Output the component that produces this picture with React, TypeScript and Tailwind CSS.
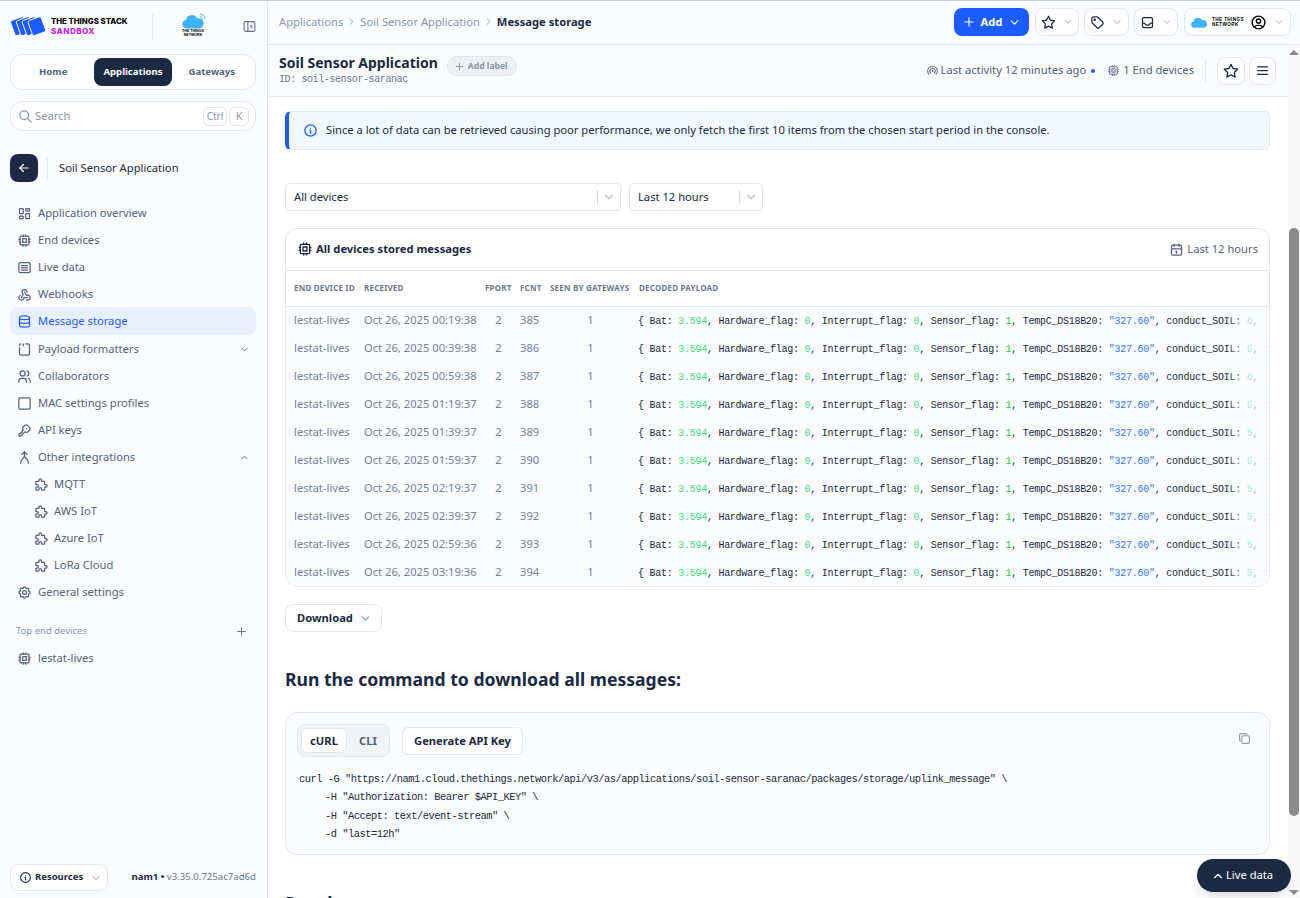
import type { ReactNode } from 'react';
import {
  TbArrowLeft,
  TbArrowMerge,
  TbBroadcast,
  TbCalendar,
  TbChevronDown,
  TbChevronRight,
  TbChevronUp,
  TbCopy,
  TbCpu,
  TbDatabase,
  TbInbox,
  TbInfoCircle,
  TbKey,
  TbLayoutDashboard,
  TbMenu2,
  TbPlus,
  TbPuzzle,
  TbSearch,
  TbSettings,
  TbSquare,
  TbStar,
  TbTag,
  TbUserCircle,
  TbUsers,
  TbWebhook,
} from 'react-icons/tb';

const messages = [
  ['Oct 26, 2025 00:19:38', '385', '6'],
  ['Oct 26, 2025 00:39:38', '386', '6'],
  ['Oct 26, 2025 00:59:38', '387', '6'],
  ['Oct 26, 2025 01:19:37', '388', '6'],
  ['Oct 26, 2025 01:39:37', '389', '5'],
  ['Oct 26, 2025 01:59:37', '390', '6'],
  ['Oct 26, 2025 02:19:37', '391', '5'],
  ['Oct 26, 2025 02:39:37', '392', '5'],
  ['Oct 26, 2025 02:59:36', '393', '5'],
  ['Oct 26, 2025 03:19:36', '394', '5'],
];

const LiveDataIcon = () => (
  <svg viewBox="0 0 24 24" className="w-[15px] h-[15px]" fill="none" stroke="currentColor" strokeWidth="2" strokeLinecap="round">
    <rect x="3" y="4" width="18" height="16" rx="2.5" />
    <path d="M7 9h10M7 12.5h10M7 16h10" />
  </svg>
);

const FormatterIcon = () => (
  <svg viewBox="0 0 24 24" className="w-[15px] h-[15px]" fill="none" stroke="currentColor" strokeWidth="2" strokeLinecap="round">
    <path d="M4 9v9a3 3 0 0 0 3 3h10a3 3 0 0 0 3-3V6a3 3 0 0 0-3-3h-3" />
    <path d="M4 5a2 2 0 0 1 2-2M10 3v3" />
  </svg>
);

const PanelIcon = () => (
  <svg viewBox="0 0 24 24" className="w-[13px] h-[13px] text-slate-500" fill="none" stroke="currentColor" strokeWidth="2" strokeLinejoin="round">
    <rect x="2" y="3" width="20" height="18" rx="3" />
    <path d="M9 3v18M17 9l-3 3 3 3" />
  </svg>
);

const StackLogo = () => (
  <svg viewBox="0 0 37 21" className="w-[37px] h-[21px]">
    {[0, 6, 12, 18].map((x) => (
      <rect key={x} x={x + 2.5} y="2" width="14.5" height="16.5" rx="2" fill="#1c5cff" stroke="#fbfcfe" strokeWidth="0.9" transform={`rotate(-20 ${x + 9.5} 10.5)`} />
    ))}
  </svg>
);

const Cloud = ({ className }: { className: string }) => (
  <svg viewBox="0 0 26 16" className={className}>
    <path d="M6 15.5a4.6 4.6 0 0 1-.8-9.1A6.5 6.5 0 0 1 17.4 4.6a5.6 5.6 0 0 1 3 10.9z" fill="#3fb4f5" />
  </svg>
);

const NetworkLogo = () => (
  <div className="flex flex-col items-center w-[24px]">
    <div className="relative">
      <Cloud className="w-[24px] h-[15px]" />
      <svg viewBox="0 0 8 8" className="absolute -top-[1px] -right-[1px] w-[7px] h-[7px]" fill="none" stroke="#3fb4f5" strokeWidth="1">
        <path d="M1 1a6 6 0 0 1 6 6M1 4a3 3 0 0 1 3 3" />
      </svg>
    </div>
    <div className="text-[3.6px] leading-[3.6px] font-bold text-black text-center mt-[1px] whitespace-nowrap font-['Liberation_Sans',sans-serif]">
      THE THINGS
      <br />
      NETWORK
    </div>
  </div>
);

const NavItem = ({ icon, label, active, sub, trailing, shifted }: { icon: ReactNode; label: string; active?: boolean; sub?: boolean; trailing?: ReactNode; shifted?: boolean }) => (
  <div
    className={`flex items-center h-[28px] -mb-px rounded-lg text-[11.2px] ${shifted ? 'mt-px' : ''} ${sub ? 'pl-[24px] gap-[5px]' : 'pl-[7px] gap-[6px]'} pr-[6px] ${
      active ? 'bg-[#e8f0fe] text-[#1c5cff]' : 'text-[#53627d]'
    }`}
  >
    <span className="flex w-[15px] justify-center text-[15px]">{icon}</span>
    <span className="flex-1">{label}</span>
    {trailing}
  </div>
);

const IconButton = ({ children, width }: { children: ReactNode; width: string }) => (
  <div className={`flex items-center justify-center gap-[6px] h-[28px] ${width} bg-white border border-[#e2e6ee] rounded-lg text-[#1c2942]`}>
    {children}
  </div>
);

const Sidebar = () => (
  <aside className="flex flex-col w-[268px] shrink-0 h-full bg-[#fbfcfe] border-r border-[#e2e6ee] pl-[10px] pr-[11px]">
    {/* Logos */}
    <div className="flex items-center h-[53px] pb-[3px]">
      <StackLogo />
      <div className="ml-[5px] w-[100px] font-['Inter',sans-serif] font-extrabold text-[7.8px] leading-[10px]">
        <div className="text-black whitespace-nowrap">THE THINGS STACK</div>
        <div className="text-[#c026e8] text-[8.2px] tracking-[0.4px]">SANDBOX</div>
      </div>
      <div className="w-px h-[25px] bg-[#e2e6ee] ml-[4px]" />
      <div className="ml-[28px]">
        <NetworkLogo />
      </div>
      <div className="ml-[38px]">
        <PanelIcon />
      </div>
    </div>

    {/* Tabs */}
    <div className="flex items-center h-[36px] bg-white border border-[#e2e6ee] rounded-xl px-[3px] text-[9.6px] font-bold text-[#53627d]">
      <div className="w-[81px] pr-[2px] text-center">Home</div>
      <div className="flex items-center justify-center w-[78px] h-[28px] bg-[#1c2942] text-white rounded-lg">Applications</div>
      <div className="w-[81px] text-center">Gateways</div>
    </div>

    {/* Search */}
    <div className="flex items-center h-[30px] mt-[11px] bg-white border border-[#e2e6ee] rounded-xl pl-[7px] pr-[6px] text-[11.2px] text-[#8a96ab]">
      <TbSearch className="text-[15px] mr-[2px]" />
      <span className="flex-1 pt-px">Search</span>
      <span className="flex items-center justify-center w-[24px] h-[19px] border border-[#dfe3eb] rounded-md text-[10px]">Ctrl</span>
      <span className="flex items-center justify-center w-[20px] h-[19px] ml-[2px] border border-[#dfe3eb] rounded-md text-[10px]">K</span>
    </div>

    {/* Application */}
    <div className="flex items-center h-[28px] mt-[23px] mb-[17px]">
      <div className="flex items-center justify-center w-[28px] h-[28px] bg-[#1c2942] rounded-lg text-white text-[14px]">
        <TbArrowLeft />
      </div>
      <div className="w-px h-[21px] bg-[#e2e6ee] ml-[9px] mr-[11px]" />
      <span className="text-[11.2px] text-[#1c2942]">Soil Sensor Application</span>
    </div>

    {/* Navigation */}
    <nav className="flex flex-col">
      <NavItem icon={<TbLayoutDashboard />} label="Application overview" />
      <NavItem icon={<TbCpu />} label="End devices" />
      <NavItem icon={<LiveDataIcon />} label="Live data" />
      <NavItem icon={<TbWebhook />} label="Webhooks" />
      <NavItem icon={<TbDatabase />} label="Message storage" active />
      <NavItem shifted icon={<FormatterIcon />} label="Payload formatters" trailing={<TbChevronDown className="text-[11px]" />} />
      <NavItem icon={<TbUsers />} label="Collaborators" />
      <NavItem icon={<TbSquare />} label="MAC settings profiles" />
      <NavItem icon={<TbKey />} label="API keys" />
      <NavItem icon={<TbArrowMerge />} label="Other integrations" trailing={<TbChevronUp className="text-[11px]" />} />
      <NavItem sub icon={<TbPuzzle />} label="MQTT" />
      <NavItem sub icon={<TbPuzzle />} label="AWS IoT" />
      <NavItem sub icon={<TbPuzzle />} label="Azure IoT" />
      <NavItem sub icon={<TbPuzzle />} label="LoRa Cloud" />
      <NavItem icon={<TbSettings />} label="General settings" />
    </nav>

    <div className="flex items-center justify-between h-[20px] mt-[16px] mb-[3px] pl-[6px] pr-[8px] text-[9.5px] text-[#8a96ab]">
      <span>Top end devices</span>
      <TbPlus className="text-[13px] text-[#6b7890]" />
    </div>
    <NavItem icon={<TbCpu />} label="lestat-lives" />

    {/* Footer */}
    <div className="flex items-center justify-between mt-auto mb-[7px]">
      <div className="flex items-center h-[27px] w-[98px] pl-[8px] bg-white border border-[#e2e6ee] rounded-lg text-[9.5px] font-bold text-[#1c2942]">
        <TbInfoCircle className="text-[13px] mr-[3px]" />
        Resources
        <TbChevronDown className="text-[12px] text-[#8a96ab] ml-[7px]" />
      </div>
      <div className="text-[9.6px] whitespace-nowrap">
        <span className="font-bold text-[#1c2942]">nam1 • </span>
        <span className="text-[#6b7890]">v3.35.0.725ac7ad6d</span>
      </div>
    </div>
  </aside>
);

const TopBar = () => (
  <header className="flex items-center h-[44px] shrink-0 bg-[#fbfcfe] border-b border-[#e2e6ee] pl-[11px] pr-[9px] pb-[1px]">
    <div className="flex items-center flex-1 text-[11.2px] text-[#8a96ab]">
      Applications
      <TbChevronRight className="mx-[3px] text-[11px]" />
      Soil Sensor Application
      <TbChevronRight className="mx-[3px] text-[11px]" />
      <span className="font-bold text-[#1c2942]">Message storage</span>
    </div>
    <div className="flex items-center">
      <div className="flex items-center justify-center gap-[5px] w-[75px] h-[28px] bg-[#1c5cff] rounded-lg text-white text-[11.2px] font-bold">
        <TbPlus className="text-[14px]" />
        Add
        <TbChevronDown className="text-[13px] ml-[1px]" />
      </div>
      <div className="ml-[6px]">
        <IconButton width="w-[44px]">
          <TbStar className="text-[15px]" />
          <TbChevronDown className="text-[12px] text-[#a0aabb]" />
        </IconButton>
      </div>
      <div className="ml-[5px]">
        <IconButton width="w-[45px]">
          <TbTag className="text-[15px]" />
          <TbChevronDown className="text-[12px] text-[#a0aabb]" />
        </IconButton>
      </div>
      <div className="ml-[5px]">
        <IconButton width="w-[44px]">
          <TbInbox className="text-[15px]" />
          <TbChevronDown className="text-[12px] text-[#a0aabb]" />
        </IconButton>
      </div>
      <div className="ml-[6px]">
        <IconButton width="w-[107px]">
          <Cloud className="w-[18px] h-[11px]" />
          <div className="text-[4.6px] leading-[5px] font-bold text-black font-['Liberation_Sans',sans-serif] -ml-[2px] tracking-[0.4px] whitespace-nowrap">
            THE THINGS
            <br />
            NETWORK
          </div>
          <TbUserCircle className="text-[17px] text-black" />
          <TbChevronDown className="text-[12px] text-[#a0aabb]" />
        </IconButton>
      </div>
    </div>
  </header>
);

const PageHeader = () => (
  <div className="flex h-[52px] shrink-0 bg-[#fbfcfe] border-b border-[#e2e6ee] pl-[11px] pr-[12px]">
    <div className="flex-1 pt-[11px]">
      <div className="flex items-center h-[20px]">
        <h1 className="mb-[6px] text-[14px] leading-[18px] font-bold text-[#1c2942]">Soil Sensor Application</h1>
        <div className="flex items-center h-[20px] w-[70px] ml-[9px] pl-[6px] gap-[3px] bg-[#eef0f4] border border-[#e2e6ee] rounded-full text-[8.6px] font-bold text-[#8a96ab] whitespace-nowrap">
          <TbPlus className="text-[11px]" />
          Add label
        </div>
      </div>
      <div className="-mt-[2px] text-[10px] tracking-[-0.4px] leading-[12px] text-[#6b7890] font-['Liberation_Mono',monospace]">ID: soil-sensor-saranac</div>
    </div>
    <div className="flex items-center text-[11.2px] text-[#53627d]">
      <TbBroadcast className="text-[13px] mr-[2px] text-[#6b7890]" />
      Last activity 12 minutes ago
      <span className="w-[4px] h-[4px] rounded-full bg-[#1c5cff] ml-[5px] mr-[12px]" />
      <TbCpu className="text-[13px] mr-[3px] text-[#6b7890]" />
      1 End devices
      <div className="w-px h-[22px] bg-[#e2e6ee] mx-[11px]" />
      <IconButton width="w-[28px]">
        <TbStar className="text-[16px]" />
      </IconButton>
      <div className="ml-[4px]">
        <IconButton width="w-[27px]">
          <TbMenu2 className="text-[15px]" />
        </IconButton>
      </div>
    </div>
  </div>
);

const Select = ({ label, width }: { label: string; width: string }) => (
  <div className={`flex items-center h-[28px] ${width} pl-[8px] bg-white border border-[#e2e6ee] rounded-[4px] text-[11.2px] text-[#1c2942]`}>
    <span className="flex-1">{label}</span>
    <div className="w-px h-[14px] bg-[#d5dae3]" />
    <TbChevronDown className="text-[14px] text-[#b4bcca] mx-[4px]" />
  </div>
);

const Payload = ({ conduct }: { conduct: string }) => {
  const num = 'text-[#4ade80]';
  return (
    <span>
      {'{ Bat: '}
      <span className={num}>3.594</span>
      {', Hardware_flag: '}
      <span className={num}>0</span>
      {', Interrupt_flag: '}
      <span className={num}>0</span>
      {', Sensor_flag: '}
      <span className="text-[#22c55e]">1</span>
      {', TempC_DS18B20: '}
      <span className="text-[#2f7bf5]">"327.60"</span>
      {', conduct_SOIL: '}
      <span className={num}>{conduct}</span>
      {', t'}
    </span>
  );
};

const MessagesCard = () => (
  <div className="mt-[17px] bg-white border border-[#e2e6ee] rounded-xl overflow-hidden">
    <div className="flex items-center justify-between h-[42px] pl-[11px] pr-[11px] border-b border-[#e2e6ee]">
      <div className="flex items-center gap-[3px] text-[11.2px] font-bold text-[#1c2942]">
        <TbCpu className="text-[16px]" />
        All devices stored messages
      </div>
      <div className="flex items-center gap-[3px] text-[11.2px] text-[#53627d]">
        <TbCalendar className="text-[15px]" />
        Last 12 hours
      </div>
    </div>
    <div className="relative">
      <table className="table-fixed w-full border-collapse">
        <colgroup>
          <col className="w-[70px]" />
          <col className="w-[121px]" />
          <col className="w-[35px]" />
          <col className="w-[30px]" />
          <col className="w-[89px]" />
          <col />
        </colgroup>
        <thead>
          <tr className="h-[35px] text-left text-[8px] font-bold text-[#6b7890] border-b border-[#e2e6ee] tracking-[0.2px]">
            <th className="pl-[8px] whitespace-nowrap">END DEVICE ID</th>
            <th className="pl-[8px]">RECEIVED</th>
            <th className="pl-[8px]">FPORT</th>
            <th className="pl-[8px]">FCNT</th>
            <th className="pl-[8px] whitespace-nowrap">SEEN BY GATEWAYS</th>
            <th className="pl-[8px]">DECODED PAYLOAD</th>
          </tr>
        </thead>
        <tbody>
          {messages.map(([received, count, conduct]) => (
            <tr key={count} className="h-[28px] bg-[#fbfcfe] text-[11.2px] text-[#73819a]">
              <td className="pl-[8px] whitespace-nowrap">lestat-lives</td>
              <td className="pl-[8px] whitespace-nowrap">{received}</td>
              <td className="text-center pl-[8px]">2</td>
              <td className="pl-[8px]">{count}</td>
              <td className="text-center pl-[8px]">1</td>
              <td className="pl-[7px] pt-[2px] overflow-hidden whitespace-nowrap text-[10px] tracking-[-0.26px] text-[#1c2942] font-['Liberation_Mono',monospace]">
                <Payload conduct={conduct} />
              </td>
            </tr>
          ))}
        </tbody>
      </table>
      {/* Fade on the clipped payload */}
      <div className="absolute top-[36px] bottom-0 right-0 w-[45px] bg-gradient-to-r from-transparent to-[#fbfcfe]" />
    </div>
  </div>
);

const CommandCard = () => (
  <div className="relative mt-[19px] h-[143px] bg-[#fbfcfe] border border-[#e2e6ee] rounded-xl px-[11px] pt-[11px]">
    <div className="flex items-center">
      <div className="flex items-center h-[33px] w-[93px] px-[3px] bg-[#f1f3f7] border border-[#e2e6ee] rounded-lg text-[11.2px] font-bold">
        <div className="flex items-center justify-center w-[46px] h-[25px] pt-px bg-white border border-[#e2e6ee] rounded-md text-[#1c2942]">cURL</div>
        <div className="flex-1 pl-[3px] pt-px text-center text-[#53627d]">CLI</div>
      </div>
      <div className="flex items-center justify-center w-[121px] h-[28px] pt-px ml-[12px] bg-white border border-[#e2e6ee] rounded-md text-[11.2px] font-bold text-[#1c2942]">
        Generate API Key
      </div>
    </div>
    <TbCopy className="absolute top-[19px] right-[18px] text-[13px] text-[#8a96ab]" />
    <div className="mt-[13px] ml-[2px] text-[10.4px] tracking-[-0.48px] leading-[18.3px] text-[#1c2942] font-['Liberation_Mono',monospace] whitespace-pre">
      <div>{'curl -G "https://nam1.cloud.thethings.network/api/v3/as/applications/soil-sensor-saranac/packages/storage/uplink_message" \\'}</div>
      <div className="pl-[26px]">{'-H "Authorization: Bearer $API_KEY" \\'}</div>
      <div className="pl-[26px]">{'-H "Accept: text/event-stream" \\'}</div>
      <div className="pl-[26px]">{'-d "last=12h"'}</div>
    </div>
  </div>
);

const Scrollbar = () => (
  <div className="flex flex-col items-center w-[12px] shrink-0 bg-[#fafafa]">
    <div className="mt-[5px] w-0 h-0 border-x-[5px] border-x-transparent border-b-[5px] border-b-[#8a8a8a]" />
    <div className="mt-[173px] w-[10px] h-[588px] rounded-[5px] bg-[#8a8a8a]" />
    <div className="mt-auto mb-[3px] w-0 h-0 border-x-[5px] border-x-transparent border-t-[5px] border-t-[#8a8a8a]" />
  </div>
);

const App = () => {
  return (
    <div className="relative flex h-[898px] overflow-hidden bg-white border-t border-[#c9cbce] font-['Noto_Sans',sans-serif]">
      <Sidebar />
      <div className="flex flex-col flex-1 min-w-0">
        <TopBar />
        <div className="flex flex-1 min-h-0">
          <main className="flex-1 min-w-0 overflow-hidden">
            <PageHeader />
            <div className="pt-[14px] pl-[17px] pr-[18px]">
              {/* Notification */}
              <div className="flex items-center h-[39px] pl-[14px] gap-[8px] bg-[#f0f9ff] border border-[#d5ecfb] border-l-4 border-l-[#1c5cff] rounded-md text-[11.2px] text-[#1c2942]">
                <TbInfoCircle className="text-[15px] text-[#1c5cff]" />
                Since a lot of data can be retrieved causing poor performance, we only fetch the first 10 items from the chosen start period in the console.
              </div>

              {/* Filters */}
              <div className="flex gap-[8px] mt-[33px]">
                <Select label="All devices" width="w-[336px]" />
                <Select label="Last 12 hours" width="w-[134px]" />
              </div>

              <MessagesCard />

              <div className="flex items-center gap-[6px] w-[97px] h-[28px] pl-[11px] mt-[17px] bg-white border border-[#e2e6ee] rounded-lg text-[11.2px] font-bold text-[#1c2942]">
                Download
                <TbChevronDown className="text-[13px] text-[#8a96ab]" />
              </div>

              <h2 className="mt-[33px] text-[17.6px] leading-[28px] font-bold text-[#1c2942]">Run the command to download all messages:</h2>

              <CommandCard />

              <h2 className="mt-[34px] text-[17.6px] leading-[28px] font-bold text-[#1c2942]">Results</h2>
            </div>
          </main>
          <Scrollbar />
        </div>
      </div>

      {/* Live data toggle */}
      <div className="absolute right-[9px] bottom-[6px] flex items-center gap-[1px] pl-[14px] w-[94px] h-[33px] bg-[#1c2942] text-white text-[11.2px] rounded-full shadow-lg">
        <TbChevronUp className="text-[14px]" />
        Live data
      </div>
    </div>
  );
};

export default App;
